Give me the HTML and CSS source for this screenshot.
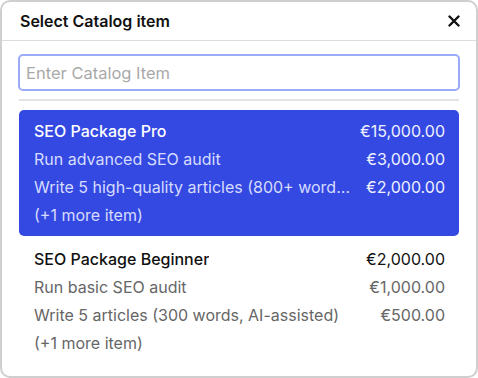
FILE: index.html
```html
<!DOCTYPE html>
<html lang="en">
<head>
  <meta charset="UTF-8">
  <meta name="viewport" content="width=device-width, initial-scale=1.0">
  <title>Select Catalog item</title>
  <link rel="stylesheet" href="styles.css">
</head>
<body>
  <div class="dialog">
    <div class="dialog-header">
      <h2>Select Catalog item</h2>
      <button class="close-btn" aria-label="Close">
        <svg width="12" height="12" viewBox="0 0 12 12">
          <path d="M1.5 1.5 L10.5 10.5 M10.5 1.5 L1.5 10.5" stroke="#111" stroke-width="2.4" stroke-linecap="round"/>
        </svg>
      </button>
    </div>
    <div class="dialog-body">
      <input type="text" class="search" placeholder="Enter Catalog Item" autofocus>
      <hr class="divider">
      <ul class="catalog-list">
        <!-- Paquete seleccionado -->
        <li class="catalog-item selected">
          <div class="row title"><span class="name">SEO Package Pro</span><span class="price">€15,000.00</span></div>
          <div class="row"><span class="name">Run advanced SEO audit</span><span class="price">€3,000.00</span></div>
          <div class="row"><span class="name">Write 5 high-quality articles (800+ words, SEO-optimized)</span><span class="price">€2,000.00</span></div>
          <div class="row"><span class="name">(+1 more item)</span></div>
        </li>
        <li class="catalog-item">
          <div class="row title"><span class="name">SEO Package Beginner</span><span class="price">€2,000.00</span></div>
          <div class="row"><span class="name">Run basic SEO audit</span><span class="price">€1,000.00</span></div>
          <div class="row"><span class="name">Write 5 articles (300 words, AI-assisted)</span><span class="price">€500.00</span></div>
          <div class="row"><span class="name">(+1 more item)</span></div>
        </li>
      </ul>
    </div>
  </div>
</body>
</html>
```

FILE: styles.css
```css
html, body {
  margin: 0;
  height: 100%;
}
body {
  font-family: Inter, "Noto Sans", Arial, sans-serif;
  color: #111;
  background: #fff;
}
.dialog {
  box-sizing: border-box;
  height: 378px;
  border: 2px solid #cfcfcf;
  border-radius: 10px;
  background: #fff;
  overflow: hidden;
}
.dialog-header {
  display: flex;
  align-items: center;
  justify-content: space-between;
  height: 38px;
  padding: 0 16px 0 18px;
  border-bottom: 1px solid #dcdcdc;
}
.dialog-header h2 {
  margin: 0;
  font-size: 16px;
  font-weight: 600;
}
.close-btn {
  display: flex;
  padding: 0;
  border: none;
  background: none;
  cursor: pointer;
}
.dialog-body {
  padding: 13px 16px 0 16px;
}
.search {
  display: block;
  width: 100%;
  box-sizing: border-box;
  height: 37px;
  padding: 0 6px;
  border: 2px solid #9aabf7;
  border-radius: 5px;
  font-family: inherit;
  font-size: 16.5px;
  color: #111;
  outline: none;
}
.search::placeholder {
  color: #a9a9a9;
}
.divider {
  margin: 8px 1px 9px;
  border: none;
  border-top: 2px solid #e3e3e3;
}
.catalog-list {
  list-style-type: none;
  margin: 0;
  padding: 0 1px;
}
.catalog-item {
  padding: 7px 14px 7px 15px;
  border-radius: 5px;
  color: #666;
}
.catalog-item + .catalog-item {
  margin-top: 2px;
}
.catalog-item.selected {
  background-color: #3449e2;
  color: #d6dcff;
}
.row {
  display: flex;
  align-items: center;
  justify-content: space-between;
  gap: 10px;
  height: 28px;
  line-height: 28px;
  font-size: 16px;
}
.row .name {
  overflow: hidden;
  white-space: nowrap;
  text-overflow: ellipsis;
}
.row .price {
  flex-shrink: 0;
}
.row.title {
  font-weight: 500;
  color: #111;
}
.selected .row.title {
  color: #fff;
}
.selected .row .price {
  color: #eef0ff;
}
.row.title .price {
  font-weight: 400;
}
```
